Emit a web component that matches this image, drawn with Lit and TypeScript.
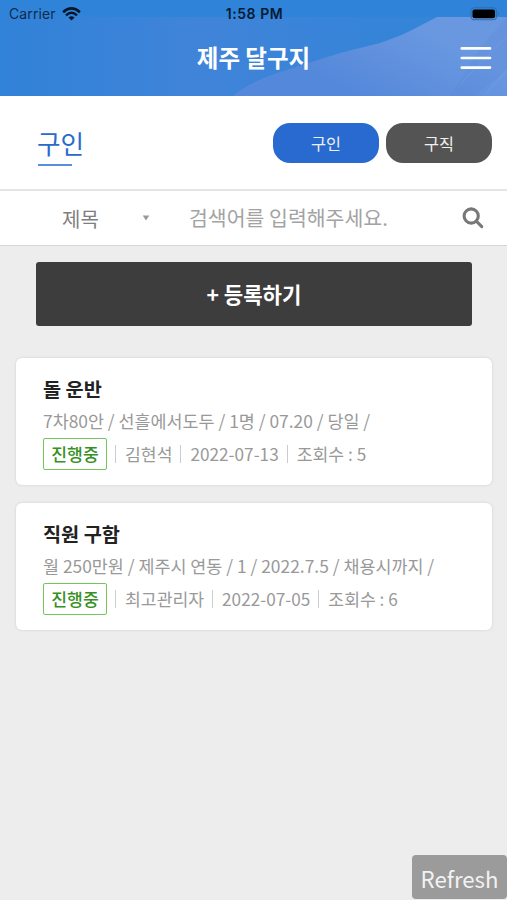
import { LitElement, html, css } from "lit";
import { customElement, property } from "lit/decorators.js";

interface Job {
  title: string;
  summary: string;
  status: string;
  author: string;
  date: string;
  views: number;
}

const JOBS: Job[] = [
  {
    title: "돌 운반",
    summary: "7차80안 / 선흘에서도두 / 1명 / 07.20 / 당일 /",
    status: "진행중",
    author: "김현석",
    date: "2022-07-13",
    views: 5,
  },
  {
    title: "직원 구함",
    summary: "월 250만원 / 제주시 연동 / 1 / 2022.7.5 / 채용시까지 /",
    status: "진행중",
    author: "최고관리자",
    date: "2022-07-05",
    views: 6,
  },
];

@customElement("app-header")
class AppHeader extends LitElement {
  static styles = css`
    :host { display: block; position: relative; height: 96px; overflow: hidden; }
    .backdrop { position: absolute; inset: 0; width: 100%; height: 100%; }
    .content { position: relative; }
    .status {
      display: grid; grid-template-columns: 1fr auto 1fr; align-items: center;
      height: 27px; padding: 0 7px 0 9px; box-sizing: border-box;
      font: 14px/27px Inter, sans-serif; color: #0f2b4c;
    }
    .carrier { display: flex; align-items: center; gap: 6px; letter-spacing: 0.1px; }
    .time { font-size: 14px; font-weight: 600; letter-spacing: 0.55px; color: #071a33; }
    .battery { justify-self: end; display: block; }
    .bar {
      display: grid; grid-template-columns: 1fr auto 1fr; align-items: center;
      height: 62px; padding: 0 15px;
    }
    .title {
      grid-column: 2; margin: 0; padding-bottom: 2px; color: #fff;
      font: 700 23.5px/60px "Noto Sans CJK KR", sans-serif;
    }
    .menu { justify-self: end; display: block; }
  `;

  render() {
    return html`
      <svg class="backdrop" viewBox="0 0 507 96" preserveAspectRatio="none">
        <defs>
          <linearGradient id="sky" gradientUnits="userSpaceOnUse" x1="0" y1="20" x2="400" y2="20">
            <stop offset="0" stop-color="#3082d8" />
            <stop offset="0.5" stop-color="#4084d9" />
            <stop offset="1" stop-color="#3484d8" />
          </linearGradient>
          <linearGradient id="hill" gradientUnits="userSpaceOnUse" x1="360" y1="96" x2="400" y2="17">
            <stop offset="0" stop-color="#5488da" />
            <stop offset="0.5" stop-color="#6090dd" />
            <stop offset="1" stop-color="#6998e1" />
          </linearGradient>
        </defs>
        <rect width="507" height="96" fill="url(#sky)" />
        <rect width="507" height="17" fill="#2f84d9" />
        <path d="M233 96Q250 82 277 73L340 53L380 43Q400 36 410 31L437 17H507V96Z" fill="url(#hill)" />
        <path d="M507 17V70L475 96H450L480 48Z" fill="#5582d8" opacity=".22" />
        <path d="M507 70L484 96M507 36L460 84" stroke="#86a9e6" opacity=".35" fill="none" />
      </svg>
      <div class="content">
        <div class="status">
          <span class="carrier">
            Carrier
            <svg width="19" height="14" viewBox="0 0 19 14" fill="none" stroke="#061629" stroke-width="2.5">
              <path d="M1.1 5.2Q9.5 -2.4 17.9 5.2" />
              <path d="M4 8.3Q9.5 3.3 15 8.3" />
              <path d="M9.5 13.6L6.5 10.6Q9.5 8 12.5 10.6Z" fill="#061629" stroke="none" />
            </svg>
          </span>
          <span class="time">1:58 PM</span>
          <svg class="battery" width="30" height="14" viewBox="0 0 30 14">
            <rect x="1" y=".8" width="25.5" height="12" rx="3.5" fill="none" stroke="#2f6dae" stroke-width="1.1" />
            <rect x="2.5" y="2.4" width="22.5" height="8.8" rx="2" fill="#000" />
            <path d="M27.8 4.6Q30 6.8 27.8 9Z" fill="#2f6dae" />
          </svg>
        </div>
        <div class="bar">
          <h1 class="title">제주 달구지</h1>
          <svg class="menu" width="32" height="24" viewBox="0 0 32 24" stroke="#fff" stroke-width="2.7" stroke-linecap="round">
            <path d="M1.8 2.4H30M1.8 12H30M1.8 21.6H30" />
          </svg>
        </div>
      </div>
    `;
  }
}

@customElement("job-card")
class JobCard extends LitElement {
  @property({ attribute: false }) job!: Job;

  static styles = css`
    :host {
      display: block; box-sizing: border-box; height: 127px; padding: 15px 27px 0;
      background: #fff; border-radius: 6px; box-shadow: 0 0 3px rgba(0, 0, 0, 0.13);
    }
    .title { margin: 0; font-size: 19.7px; line-height: 32px; font-weight: 700; color: #222; }
    .summary { margin: 0; font-size: 17.4px; line-height: 32px; color: #999; white-space: nowrap; }
    .meta {
      display: flex; align-items: flex-start; height: 33px; line-height: 33px;
      font-size: 17.2px; color: #999; white-space: nowrap;
    }
    .badge {
      box-sizing: border-box; width: 64px; height: 32px; margin-top: 1px; line-height: 29px; text-align: center;
      border: 1.5px solid #72c65c; border-radius: 2px; color: #36901f; font-weight: 500;
    }
    .item { display: flex; align-items: center; }
    .item::before { content: ""; width: 1px; height: 18px; margin: 0 9px 0 8px; background: #ccc; }
  `;

  render() {
    const { title, summary, status, author, date, views } = this.job;
    return html`
      <h2 class="title">${title}</h2>
      <p class="summary">${summary}</p>
      <div class="meta">
        <span class="badge">${status}</span>
        <span class="item">${author}</span>
        <span class="item">${date}</span>
        <span class="item">조회수 : ${views}</span>
      </div>
    `;
  }
}

@customElement("app-root")
class AppRoot extends LitElement {
  static styles = css`
    :host {
      display: flex; flex-direction: column; position: relative; box-sizing: border-box;
      height: 900px; overflow: hidden; background: #ededed;
      font-family: "Noto Sans CJK KR", sans-serif;
    }
    .heading {
      display: flex; align-items: center; justify-content: space-between; box-sizing: border-box;
      height: 95px; padding: 0 15px 0 37px; background: #fff; border-bottom: 2px solid #e5e5e5;
    }
    .name { margin: 0; color: #2a6acb; font-size: 25.6px; line-height: 38px; font-weight: 400; padding-top: 5px; }
    .name::after { content: ""; display: block; width: 34px; height: 2px; margin: 2px 0 0 1px; background: #5a8edb; }
    .tabs { display: flex; gap: 7px; }
    .tab {
      width: 106px; height: 40px; padding: 0; border: 0; border-radius: 17px;
      background: #545454; color: #f0f0f0; font: 16.3px/40px "Noto Sans CJK KR", sans-serif;
    }
    .active { background: #286acf; }
    .search {
      display: flex; align-items: center; box-sizing: border-box; height: 55px;
      padding: 0 23px 0 62px; background: #fff; border-bottom: 1px solid #d5d5d5;
      font-size: 20.5px; color: #808080;
    }
    .field { width: 80px; font-size: 20px; }
    .arrow { width: 8px; height: 6px; margin-right: 39px; }
    .hint { flex: 1; color: #a3a3a3; padding-bottom: 2px; }
    .register {
      height: 64px; margin: 16px 35px 0 36px; padding: 0 0 1px; border: 0; border-radius: 3px;
      background: #3d3d3d; color: #fff; font: 700 21.1px/62px "Noto Sans CJK KR", sans-serif;
    }
    .list { display: flex; flex-direction: column; gap: 18px; padding: 32px 15px 0 16px; }
    .refresh {
      position: absolute; right: 0; bottom: 1px; width: 95px; height: 44px; padding: 2px 0 0;
      border: 0; border-radius: 4px; background: #9b9b9b; color: #f2f2f2;
      font: 22.2px/42px "Noto Sans CJK KR", sans-serif;
    }
  `;

  render() {
    return html`
      <app-header></app-header>
      <section class="heading">
        <h2 class="name">구인</h2>
        <div class="tabs">
          <button class="tab active">구인</button>
          <button class="tab">구직</button>
        </div>
      </section>
      <div class="search">
        <span class="field">제목</span>
        <svg class="arrow" viewBox="0 0 8 6"><path d="M.7.5H7.3L4 5.5Z" fill="#999" /></svg>
        <span class="hint">검색어를 입력해주세요.</span>
        <svg width="22" height="22" viewBox="0 0 22 22" fill="none" stroke="#777" stroke-width="3.1">
          <circle cx="9.2" cy="9" r="7.1" />
          <path d="M14.3 14.1L19.8 19.6" stroke-linecap="round" stroke-width="3" />
        </svg>
      </div>
      <button class="register">+ 등록하기</button>
      <main class="list">
        ${JOBS.map((job) => html`<job-card .job=${job}></job-card>`)}
      </main>
      <button class="refresh">Refresh</button>
    `;
  }
}
